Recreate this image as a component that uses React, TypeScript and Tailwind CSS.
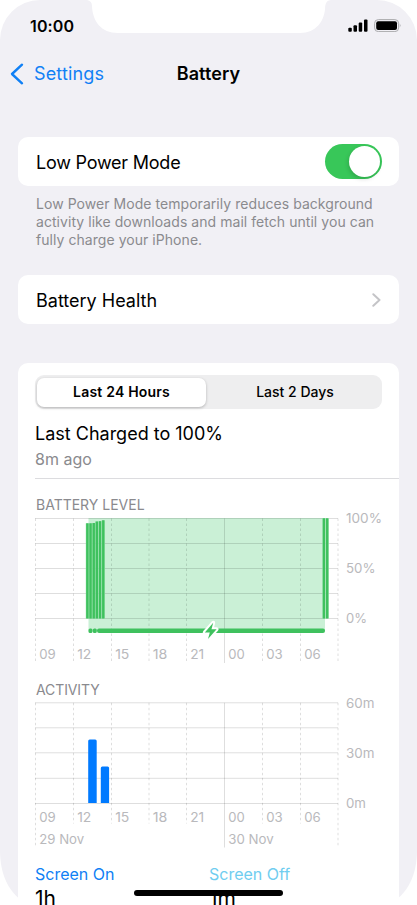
const HOURS = ['09', '12', '15', '18', '21', '00', '03', '06']
const HOUR_WIDTHS = [16.5, 14.2, 14.2, 14.6, 14, 16.5, 16.5, 16.5]
const COLUMNS = [35.5, 73.5, 111.5, 149, 186.5, 224.5, 262.5, 300.5, 338]
const MIDNIGHT = 5

interface GridProps {
  rows: number[]
  bottom: number
  outerBottom: number
  midnightBottom: number
}

const Grid = ({ rows, bottom, outerBottom, midnightBottom }: GridProps) => (
  <g stroke="#000" strokeOpacity={0.13} strokeWidth={1}>
    {rows.map((y) => (
      <line key={y} x1={35} x2={338} y1={y} y2={y} />
    ))}
    {COLUMNS.map((x, i) => {
      if (i === MIDNIGHT) {
        return <line key={x} x1={x} x2={x} y1={rows[0]} y2={midnightBottom} />
      }
      const outer = i === 0 || i === COLUMNS.length - 1
      return (
        <line
          key={x}
          x1={x}
          x2={x}
          y1={rows[0]}
          y2={outer ? outerBottom : bottom}
          strokeDasharray="2.5 2.5"
        />
      )
    })}
  </g>
)

interface LabelProps {
  x: number
  y: number
  width: number
  children: string
}

const Label = ({ x, y, width, children }: LabelProps) => (
  <text x={x} y={y} textLength={width} lengthAdjust="spacingAndGlyphs">
    {children}
  </text>
)

const HourLabels = ({ y }: { y: number }) => (
  <>
    {HOURS.map((hour, i) => (
      <Label key={hour} x={COLUMNS[i] + 3.7} y={y} width={HOUR_WIDTHS[i]}>
        {hour}
      </Label>
    ))}
  </>
)

const BatteryLevelChart = () => {
  const bars = [
    { x: 86.2, top: 523.3 },
    { x: 89.4, top: 523.3 },
    { x: 92.6, top: 523 },
    { x: 95.7, top: 521.5 },
    { x: 98.9, top: 521.2 },
    { x: 102.1, top: 520.3 },
    { x: 322.8, top: 518.3 },
    { x: 326, top: 518.3 },
  ]

  return (
    <svg className="block h-[155px] w-[381px] shrink-0 overflow-visible" viewBox="18 514 381 155" fontSize={13} fill="#b9b9bc">
      <rect x={88.5} y={518} width={236.5} height={113} fill="#caf0d6" />
      <Grid rows={[518.5, 543.5, 568.5, 593.5, 618.5]} bottom={661} outerBottom={661} midnightBottom={663} />
      {bars.map(({ x, top }) => (
        <g key={x}>
          <rect x={x - 0.4} y={top} width={3.2} height={618.5 - top} fill="#8fdfa5" />
          <rect x={x} y={top} width={2.3} height={618.5 - top} fill="#3fc15e" />
        </g>
      ))}
      <rect x={88.5} y={628.6} width={4} height={4.4} rx={1.5} fill="#3fc15e" />
      <rect x={92.8} y={628.6} width={4} height={4.4} rx={1.5} fill="#3fc15e" />
      <rect x={97} y={628.6} width={228} height={4.4} rx={2} fill="#3fc15e" />
      <path
        d="M213.2 622.8 L204.8 632.4 H209.8 L208 639 L216.6 629.2 H211.5 Z"
        fill="#3fc15e"
        stroke="#fff"
        strokeWidth={4}
        strokeLinejoin="round"
        paintOrder="stroke"
      />
      <HourLabels y={659} />
      <Label x={346} y={522.8} width={36}>100%</Label>
      <Label x={346} y={572.8} width={29.5}>50%</Label>
      <Label x={346} y={622.8} width={21}>0%</Label>
    </svg>
  )
}

const ActivityChart = () => (
  <svg className="block h-[151px] w-[381px] shrink-0 overflow-visible" viewBox="18 699 381 151" fontSize={13} fill="#b9b9bc">
    <Grid rows={[702.8, 727.8, 752.8, 778.3, 803.5]} bottom={823.5} outerBottom={846} midnightBottom={847.5} />
    <path d="M88.2 803 V741 Q88.2 739.5 89.7 739.5 H95.2 Q96.7 739.5 96.7 741 V803 Z" fill="#007aff" />
    <path d="M100.8 803 V768 Q100.8 766.5 102.3 766.5 H107.6 Q109.1 766.5 109.1 768 V803 Z" fill="#007aff" />
    <HourLabels y={821.6} />
    <Label x={39.2} y={843.7} width={45}>29 Nov</Label>
    <Label x={228.2} y={843.7} width={45.5}>30 Nov</Label>
    <Label x={346} y={707.6} width={28.5}>60m</Label>
    <Label x={346} y={757.6} width={28.5}>30m</Label>
    <Label x={346} y={808} width={20}>0m</Label>
  </svg>
)

const StatusBar = () => (
  <div className="relative flex h-[50px] shrink-0 items-center justify-between pl-[30px] pr-[15px]">
    <svg className="absolute left-0 top-0 h-[34px] w-[417px]" viewBox="0 0 417 34" fill="#fff">
      <path d="M87 0 Q92 1 92 6 C92.5 21 101 33 118 33 H300 C316 33 325 21 325.2 6 Q326 0 331 0 Z" />
    </svg>
    <span className="relative pt-px text-[16px] font-semibold leading-5 tracking-[0.15px]">10:00</span>
    <div className="relative flex items-center gap-[6px]">
      <svg className="h-[13px] w-[20px]" viewBox="348 19 20 13">
        <rect x={348.3} y={27.7} width={3.5} height={4.1} rx={1} />
        <rect x={353.5} y={25.3} width={3.5} height={6.5} rx={1} />
        <rect x={358.7} y={22.5} width={3.5} height={9.3} rx={1} />
        <rect x={364} y={19.6} width={3.5} height={12.2} rx={1} />
      </svg>
      <svg className="h-[13px] w-[28px]" viewBox="374 19 28 13">
        <rect x={374.6} y={19.6} width={24} height={12} rx={3.7} fill="none" stroke="#aaaaad" />
        <rect x={376.2} y={21.2} width={20.8} height={8.8} rx={2} />
        <path d="M399.8 23.6 Q401.5 25.5 399.8 27.5 Z" fill="#aaaaad" />
      </svg>
    </div>
  </div>
)

const App = () => {
  return (
    <div className="h-[905px] w-[417px] overflow-hidden bg-white font-['Inter',sans-serif] text-black">
      <div className="relative flex h-[957px] w-[417px] flex-col overflow-hidden rounded-t-[40px] bg-[#f1f0f5]">
        <StatusBar />

        <header className="relative flex h-[48px] shrink-0 items-center justify-center">
          <button className="absolute left-[10px] flex items-center gap-[10px] text-[#1080f5]">
            <svg className="h-[22px] w-[14px]" viewBox="0 0 14 22" fill="none" stroke="currentColor" strokeWidth={2.4} strokeLinecap="round" strokeLinejoin="round">
              <path d="M12 1.7 L2 11 L12 20.3" />
            </svg>
            <span className="text-[18px] leading-6 tracking-[0.15px]">Settings</span>
          </button>
          <h1 className="text-[18px] font-semibold leading-6 tracking-[0.1px]">Battery</h1>
        </header>

        <main className="flex flex-col px-[18px] pt-[39px]">
          <div className="flex h-[49px] items-center justify-between rounded-[10px] bg-white pl-[18px] pr-[17px]">
            <span className="pt-px text-[18px] tracking-[-0.23px]">Low Power Mode</span>
            <div className="flex h-[35px] w-[57px] items-center justify-end rounded-full bg-[#38c759] pr-[2px]">
              <div className="size-[31px] rounded-full bg-white shadow-[-1px_2px_4px_rgba(0,0,0,0.15)]" />
            </div>
          </div>
          <p className="whitespace-nowrap pl-[18px] pt-[9px] text-[14px] leading-[18px] tracking-[0.05px] text-[#8a8a8e]">
            Low Power Mode temporarily reduces background
            <br />
            activity like downloads and mail fetch until you can
            <br />
            fully charge your iPhone.
          </p>

          <div className="mt-[26px] flex h-[49px] items-center justify-between rounded-[10px] bg-white pl-[18px] pr-[18px]">
            <span className="pt-px text-[18px]">Battery Health</span>
            <svg className="h-[14px] w-[9px]" viewBox="0 0 9 14" fill="none" stroke="#c4c4c7" strokeWidth={2} strokeLinecap="round" strokeLinejoin="round">
              <path d="M1.3 1.3 L7.5 7 L1.3 12.7" />
            </svg>
          </div>

          <section className="mt-[39px] flex h-[600px] flex-col overflow-hidden rounded-t-[10px] bg-white">
            <div className="ml-[17px] mt-3 flex h-[34px] w-[347px] shrink-0 items-center rounded-[9px] bg-[#eeeeef] p-[2px] text-[14px]">
              <div className="flex h-[29px] w-[169px] items-center justify-center rounded-[7px] bg-white pb-px font-semibold tracking-[0.2px] shadow-[0_1px_3px_rgba(0,0,0,0.25)]">
                Last 24 Hours
              </div>
              <div className="flex flex-1 items-center justify-center pb-px pl-[4px] font-medium">Last 2 Days</div>
            </div>

            <div className="ml-[17px] flex h-[70px] shrink-0 flex-col border-b border-[#dcdcdf] pt-[13px]">
              <span className="text-[18px] leading-6">Last Charged to 100%</span>
              <span className="pt-px text-[16px] leading-6 text-[#8a8a8e]">8m ago</span>
            </div>

            <h2 className="ml-[18px] mt-[16px] h-[19px] shrink-0 text-[14px] leading-5 text-[#8a8a8e]">BATTERY LEVEL</h2>
            <BatteryLevelChart />
            <h2 className="ml-[18px] mt-[11px] h-[19px] shrink-0 text-[14px] leading-5 tracking-[-0.1px] text-[#8a8a8e]">ACTIVITY</h2>
            <ActivityChart />

            <div className="grid grid-cols-[174px_1fr] pl-[17px] pt-[14px]">
              <div className="flex flex-col">
                <span className="text-[16px] leading-5 text-[#1080f5]">Screen On</span>
                <span className="pt-px text-[21px] leading-7">1h</span>
              </div>
              <div className="flex flex-col">
                <span className="text-[16px] leading-5 text-[#70cdf0]">Screen Off</span>
                <span className="pt-px text-[21px] leading-7">1m</span>
              </div>
            </div>
          </section>
        </main>

        {/* white display corners at the bottom edge */}
        <svg className="absolute left-0 top-[850px] h-[55px] w-[417px]" viewBox="0 850 417 55" fill="#fff">
          <path d="M0 850 C0 874 8 893 28 905 H0 Z" />
          <path d="M417 850 C417 874 409 893 389 905 H417 Z" />
        </svg>
        <div className="absolute left-[134px] top-[890px] h-[6px] w-[149px] rounded-full bg-black" />
      </div>
    </div>
  )
}

export default App
